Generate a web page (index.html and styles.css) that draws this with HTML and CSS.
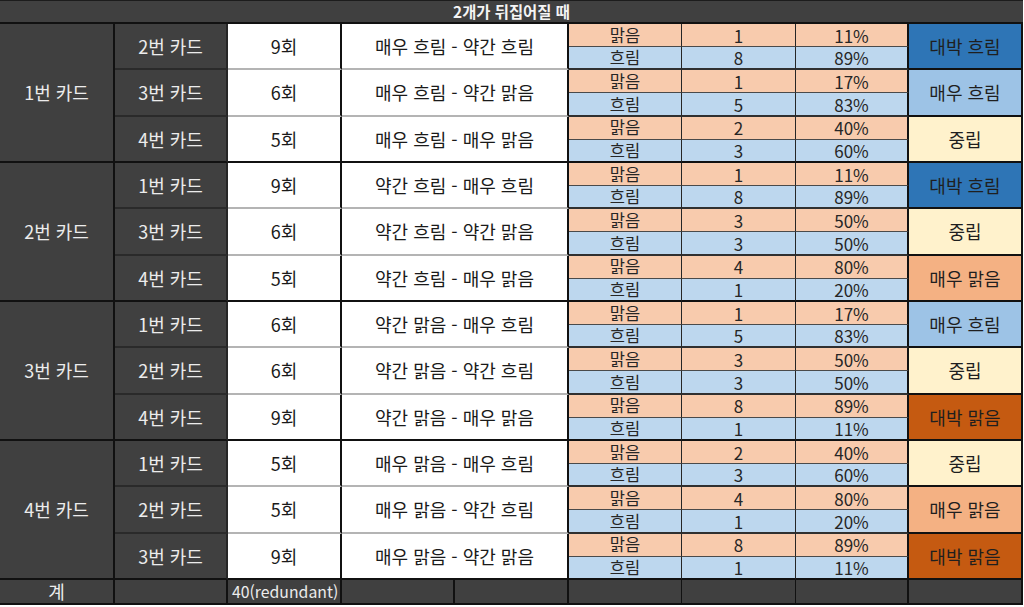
FILE: index.html
```html
<!DOCTYPE html>
<html lang="ko">
<head>
<meta charset="utf-8">
<title>2개가 뒤집어질 때</title>
<link rel="stylesheet" href="styles.css">
</head>
<body>
<div class="sheet">
  <div class="title">2개가 뒤집어질 때</div>

  <!-- 1번 카드 -->
  <div class="c1 dark">1번 카드</div>
  <div class="c2 dark">2번 카드</div>
  <div class="c3">9회</div>
  <div class="c4">매우 흐림 - 약간 흐림</div>
  <div class="c5 or top">맑음</div><div class="c6 or top">1</div><div class="c7 or top">11%</div>
  <div class="c8 v-bigblue">대박 흐림</div>
  <div class="c5 bl">흐림</div><div class="c6 bl">8</div><div class="c7 bl">89%</div>

  <div class="c2 dark">3번 카드</div>
  <div class="c3">6회</div>
  <div class="c4">매우 흐림 - 약간 맑음</div>
  <div class="c5 or top">맑음</div><div class="c6 or top">1</div><div class="c7 or top">17%</div>
  <div class="c8 v-blue">매우 흐림</div>
  <div class="c5 bl">흐림</div><div class="c6 bl">5</div><div class="c7 bl">83%</div>

  <div class="c2 dark end">4번 카드</div>
  <div class="c3 end">5회</div>
  <div class="c4 end">매우 흐림 - 매우 맑음</div>
  <div class="c5 or top">맑음</div><div class="c6 or top">2</div><div class="c7 or top">40%</div>
  <div class="c8 v-neutral">중립</div>
  <div class="c5 bl end">흐림</div><div class="c6 bl end">3</div><div class="c7 bl end">60%</div>

  <!-- 2번 카드 -->
  <div class="c1 dark">2번 카드</div>
  <div class="c2 dark">1번 카드</div>
  <div class="c3">9회</div>
  <div class="c4">약간 흐림 - 매우 흐림</div>
  <div class="c5 or top">맑음</div><div class="c6 or top">1</div><div class="c7 or top">11%</div>
  <div class="c8 v-bigblue">대박 흐림</div>
  <div class="c5 bl">흐림</div><div class="c6 bl">8</div><div class="c7 bl">89%</div>

  <div class="c2 dark">3번 카드</div>
  <div class="c3">6회</div>
  <div class="c4">약간 흐림 - 약간 맑음</div>
  <div class="c5 or top">맑음</div><div class="c6 or top">3</div><div class="c7 or top">50%</div>
  <div class="c8 v-neutral">중립</div>
  <div class="c5 bl">흐림</div><div class="c6 bl">3</div><div class="c7 bl">50%</div>

  <div class="c2 dark end">4번 카드</div>
  <div class="c3 end">5회</div>
  <div class="c4 end">약간 흐림 - 매우 맑음</div>
  <div class="c5 or top">맑음</div><div class="c6 or top">4</div><div class="c7 or top">80%</div>
  <div class="c8 v-orange">매우 맑음</div>
  <div class="c5 bl end">흐림</div><div class="c6 bl end">1</div><div class="c7 bl end">20%</div>

  <!-- 3번 카드 -->
  <div class="c1 dark">3번 카드</div>
  <div class="c2 dark">1번 카드</div>
  <div class="c3">6회</div>
  <div class="c4">약간 맑음 - 매우 흐림</div>
  <div class="c5 or top">맑음</div><div class="c6 or top">1</div><div class="c7 or top">17%</div>
  <div class="c8 v-blue">매우 흐림</div>
  <div class="c5 bl">흐림</div><div class="c6 bl">5</div><div class="c7 bl">83%</div>

  <div class="c2 dark">2번 카드</div>
  <div class="c3">6회</div>
  <div class="c4">약간 맑음 - 약간 흐림</div>
  <div class="c5 or top">맑음</div><div class="c6 or top">3</div><div class="c7 or top">50%</div>
  <div class="c8 v-neutral">중립</div>
  <div class="c5 bl">흐림</div><div class="c6 bl">3</div><div class="c7 bl">50%</div>

  <div class="c2 dark end">4번 카드</div>
  <div class="c3 end">9회</div>
  <div class="c4 end">약간 맑음 - 매우 맑음</div>
  <div class="c5 or top">맑음</div><div class="c6 or top">8</div><div class="c7 or top">89%</div>
  <div class="c8 v-bigorange">대박 맑음</div>
  <div class="c5 bl end">흐림</div><div class="c6 bl end">1</div><div class="c7 bl end">11%</div>

  <!-- 4번 카드 -->
  <div class="c1 dark">4번 카드</div>
  <div class="c2 dark">1번 카드</div>
  <div class="c3">5회</div>
  <div class="c4">매우 맑음 - 매우 흐림</div>
  <div class="c5 or top">맑음</div><div class="c6 or top">2</div><div class="c7 or top">40%</div>
  <div class="c8 v-neutral">중립</div>
  <div class="c5 bl">흐림</div><div class="c6 bl">3</div><div class="c7 bl">60%</div>

  <div class="c2 dark">2번 카드</div>
  <div class="c3">5회</div>
  <div class="c4">매우 맑음 - 약간 흐림</div>
  <div class="c5 or top">맑음</div><div class="c6 or top">4</div><div class="c7 or top">80%</div>
  <div class="c8 v-orange">매우 맑음</div>
  <div class="c5 bl">흐림</div><div class="c6 bl">1</div><div class="c7 bl">20%</div>

  <div class="c2 dark end">3번 카드</div>
  <div class="c3 end">9회</div>
  <div class="c4 end">매우 맑음 - 약간 맑음</div>
  <div class="c5 or top">맑음</div><div class="c6 or top">8</div><div class="c7 or top">89%</div>
  <div class="c8 v-bigorange">대박 맑음</div>
  <div class="c5 bl end">흐림</div><div class="c6 bl end">1</div><div class="c7 bl end">11%</div>

  <!-- 합계 -->
  <div class="f f1">계</div>
  <div class="f f2"></div>
  <div class="f f3">40(redundant)</div>
  <div class="f f4a"></div>
  <div class="f f4b"></div>
  <div class="f f5"></div>
  <div class="f f6"></div>
  <div class="f f7"></div>
  <div class="f f8"></div>
</div>
</body>
</html>
```

FILE: styles.css
```css
html, body {
  margin: 0;
  padding: 0;
  background: #ffffff;
}

.sheet {
  display: grid;
  width: 1023px;
  height: 604px;
  border-top: 1px solid #1c1c1c;
  grid-template-columns: 115px 113px 114px 113px 114px 113px 114px 113px 114px;
  grid-template-rows: 23px repeat(24, 1fr) 25px;
  font-family: "Noto Sans CJK KR", "Noto Sans", sans-serif;
  font-size: 18px;
  color: #1a1a1a;
}

.sheet > div {
  box-sizing: border-box;
  display: flex;
  align-items: center;
  justify-content: center;
  line-height: 1;
  white-space: nowrap;
  min-height: 0;
}

.title {
  grid-column: 1 / -1;
  background: #404040;
  color: #f4f4f4;
  font-size: 15.4px;
  font-weight: 700;
  border-bottom: 2px solid #111;
}

.dark {
  background: #404040;
  color: #ececec;
}

.c1 {
  grid-column: 1;
  grid-row: span 6;
  border-right: 2px solid #111;
  border-bottom: 2px solid #111;
}

.c2 {
  grid-column: 2;
  grid-row: span 2;
  border-right: 2px solid #262626;
  border-bottom: 2px solid #2a2a2a;
}

.c3 {
  grid-column: 3;
  grid-row: span 2;
  background: #ffffff;
  border-right: 2px solid #111;
  border-bottom: 2px solid #b4b4b4;
}

.c4 {
  grid-column: 4 / 6;
  grid-row: span 2;
  background: #ffffff;
  border-right: 2px solid #111;
  border-bottom: 2px solid #b4b4b4;
}

.c5 { grid-column: 6; border-right: 1px solid #262626; font-size: 16.5px; }
.c6 { grid-column: 7; border-right: 1px solid #262626; font-size: 17px; }
.c7 { grid-column: 8; border-right: 2px solid #111; font-size: 17px; }

.or {
  background: #f8cbad;
  color: #262626;
}
.bl {
  background: #bdd7ee;
  color: #262626;
  border-bottom: 2px solid #303030;
}
.top {
  border-bottom: 1px solid #4a4a4a;
}

.c8 {
  grid-column: 9;
  grid-row: span 2;
  border-right: 2px solid #111;
  border-bottom: 2px solid #111;
  color: #1f1f1f;
}

.v-bigblue { background: #2e75b6; }
.v-blue { background: #9dc3e6; }
.v-neutral { background: #fff2cc; }
.v-orange { background: #f4b183; }
.v-bigorange { background: #c55a11; }

.sheet > .end {
  border-bottom: 2px solid #111;
}

.f {
  background: #404040;
  color: #ececec;
  border-right: 2px solid #111;
  border-bottom: 2px solid #111;
}
.f1 { grid-column: 1; }
.f2 { grid-column: 2; }
.sheet > .f3 {
  grid-column: 3;
  justify-content: flex-start;
  padding-left: 4px;
  font-size: 15.8px;
}
.f4a { grid-column: 4; }
.f4b { grid-column: 5; }
.f5 { grid-column: 6; border-right-width: 1px; }
.f6 { grid-column: 7; border-right-width: 1px; }
.f7 { grid-column: 8; }
.f8 { grid-column: 9; }
```
